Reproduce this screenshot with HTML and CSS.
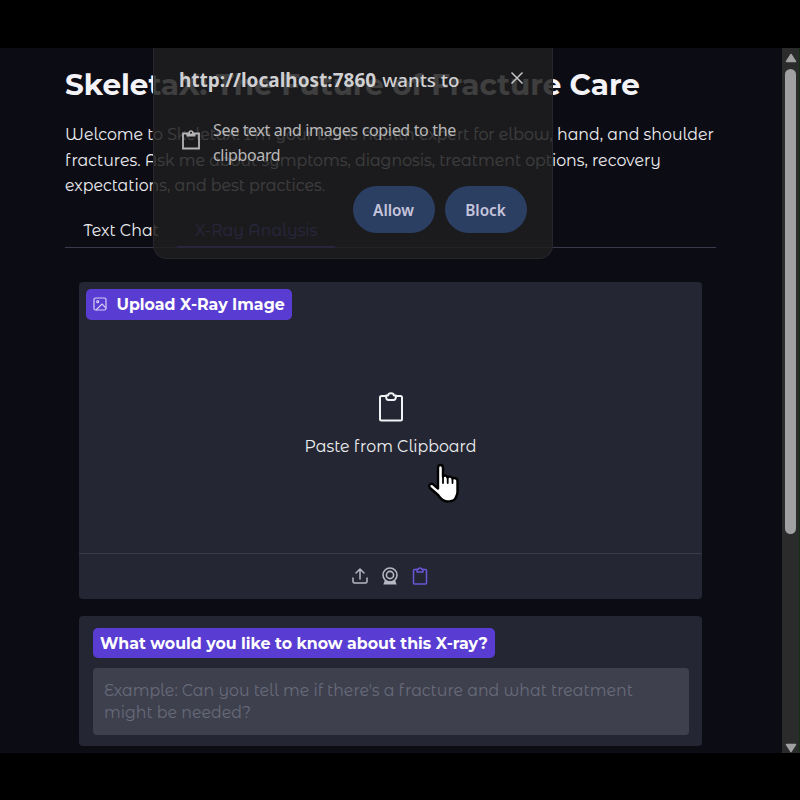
FILE: index.html
```
<!DOCTYPE html>
<html lang="en">
<head>
<meta charset="utf-8">
<title>SkeletaX</title>
<link rel="stylesheet" href="styles.css">
</head>
<body>
<div class="screen">
  <main class="page">
    <h1>SkeletaX: The Future of Fracture Care</h1>
    <p class="intro">
      <span>Welcome to SkeletaX! I'm your bone health expert for elbow, hand, and shoulder</span>
      <span>fractures. Ask me about symptoms, diagnosis, treatment options, recovery</span>
      <span>expectations, and best practices.</span>
    </p>
    <nav class="tabs">
      <span class="tab t1">Text Chat</span>
      <span class="tab active t2">X-Ray Analysis</span>
    </nav>
    <section class="card upload">
      <div class="label label-img">
        <svg width="14" height="14" viewBox="0 0 14 14" fill="none" stroke="#d5cdf7" stroke-width="1.2"><rect x="1" y="1" width="12" height="12" rx="1.5"/><circle cx="4.7" cy="4.7" r="1"/><path d="M3 13l6-6 4 4"/></svg>
        <span>Upload X-Ray Image</span>
      </div>
      <div class="drop">
        <svg width="26" height="30" viewBox="0 0 26 30" fill="none" stroke="#f1f2f5" stroke-width="2" stroke-linejoin="round"><path d="M8 4H3.5Q2 4 2 5.500V27Q2 28.500 3.500 28.500H22.500Q24 28.500 24 27V5.500Q24 4 22.500 4H18"/><path d="M8 3.500H10C10.500 .6 15.500 .6 16 3.500H18C18 6.500 17 8 15.500 8H10.500C9 8 8 6.500 8 3.500Z"/></svg>
        <span class="paste">Paste from Clipboard</span>
      </div>
      <div class="sources">
        <svg width="16" height="18" viewBox="0 0 16 18" fill="none" stroke="#b6b8c2" stroke-width="1.5" stroke-linecap="round" stroke-linejoin="round"><path d="M8 12V2M4 6l4-4 4 4M1 11v3.500Q1 16 2.500 16h11Q15 16 15 14.500V11"/></svg>
        <svg width="18" height="18" viewBox="0 0 18 18" fill="none" stroke="#b6b8c2" stroke-width="1.6"><circle cx="9" cy="8" r="7"/><circle cx="9" cy="8" r="3.600"/><path d="M4.500 14L3.500 16.700H14.500L13.500 14C11 15.500 7 15.500 4.500 14Z" fill="#b6b8c2"/></svg>
        <svg width="16" height="18" viewBox="0 0 16 18" fill="none" stroke="#6a55d8" stroke-width="1.500" stroke-linejoin="round"><path d="M5 2.500H2.500Q1.500 2.500 1.500 3.500V16Q1.500 17 2.500 17H13.500Q14.500 17 14.500 16V3.500Q14.500 2.500 13.500 2.500H11"/><path d="M5 2.300H6.200C6.500 .6 9.500 .6 9.800 2.300H11V5H5Z"/></svg>
      </div>
    </section>
    <section class="card question">
      <div class="label">What would you like to know about this X-ray?</div>
      <div class="field">
        <span>Example: Can you tell me if there's a fracture and what treatment</span>
        <span>might be needed?</span>
      </div>
    </section>
  </main>
  <aside class="scrollbar">
    <svg width="12" height="10" viewBox="0 0 12 10"><path d="M6 1.500L10.500 8.500H1.500Z" fill="#a0a0a2" stroke="#a0a0a2" stroke-width="1.500" stroke-linejoin="round"/></svg>
    <div class="track"><div class="thumb"></div></div>
    <svg width="12" height="10" viewBox="0 0 12 10"><path d="M6 8.500L10.500 1.500H1.500Z" fill="#a0a0a2" stroke="#a0a0a2" stroke-width="1.500" stroke-linejoin="round"/></svg>
  </aside>
  <div class="prompt">
    <div class="prompt-head">
      <div class="site"><b>http://localhost:7860</b> <span>wants to</span></div>
      <svg width="14" height="14" viewBox="0 0 14 14" stroke="#c4c4c6" stroke-width="1.500"><path d="M1.500 1.500l11 11M12.500 1.500l-11 11"/></svg>
    </div>
    <div class="perm">
      <svg width="18" height="20" viewBox="0 0 18 20" fill="none" stroke="#b4b4b6" stroke-width="1.800"><path d="M1 3.500H17V18.500H1Z"/><path d="M4.500 3H13.500V6.500H4.500Z" fill="#b4b4b6" stroke="none"/><circle cx="9" cy="2.800" r="1.800" fill="#1c1c1d" stroke-width="1.500"/></svg>
      <div class="perm-text"><span>See text and images copied to the</span><span>clipboard</span></div>
    </div>
    <div class="actions"><div class="btn">Allow</div><div class="btn">Block</div></div>
  </div>
  <svg class="cursor" width="34" height="42" viewBox="0 0 34 42"><path d="M11 5C11 1 16 1 16 5V13.500C17 12 20 12.500 20.500 14.500C21.500 13 25 13.500 25.500 15.500C27 14.500 30.500 15 30.500 18V29C30.500 32 29 34 28 36C26 38.500 23.500 38.500 20 38.500C16 38.500 13.500 35.500 11 32L3 25C0.500 21.500 4.500 19.500 7 22L11 25.500Z" fill="#fff" stroke="#000" stroke-width="2.400" stroke-linejoin="round"/><path d="M16 13V20M20.700 14.500V20M25.500 15.500V20" stroke="#000" stroke-width="1.800" stroke-linecap="round"/></svg>
</div>
</body>
</html>
```
FILE: styles.css
```
* { box-sizing: border-box; }
body {
  margin: 0;
  height: 800px;
  padding: 48px 0;
  background: #000;
  color: #eeeef0;
  font-family: "Montserrat Alternates", Montserrat, Inter, sans-serif;
  font-size: 15.8px;
  overflow: hidden;
}
svg { display: block; flex: none; }
.screen {
  position: relative;
  display: flex;
  height: 705px;
  background: #0c0c15;
  border-right: 1px solid #163016;
}
.page { width: 782px; padding: 16px 66px 0 65px; overflow: hidden; white-space: nowrap; }
h1 { margin: 0; height: 40px; line-height: 41px; font-family: Montserrat, Inter, sans-serif; font-size: 29.45px; font-weight: 700; color: #f4f4f8; }
.intro { margin: 18px 0 0; line-height: 25.7px; }
.intro span { display: block; }
.tabs { display: flex; height: 49px; border-bottom: 1px solid #3b3b50; align-items: stretch; }
.tab { padding: 20px 18px 0; line-height: 24px; height: 49px; }
.t1 { width: 112px; padding-left: 18.5px; }
.t2 { width: 158px; }
.active { color: #5b4fe6; border-bottom: 2px solid #5b4fe6; }
.card { margin-left: 14px; width: 623px; background: #242733; border-radius: 4px; }
.upload { display: flex; flex-direction: column; margin-top: 34px; height: 317px; padding-top: 7px; }
.label {
  display: inline-flex;
  align-items: center;
  height: 31px;
  padding: 0 7px;
  border-radius: 5px;
  background: #593dd2;
  color: #fff;
  font-family: Montserrat, Inter, sans-serif;
  font-weight: 700;
  align-self: flex-start;
}
.label-img { margin-left: 7px; gap: 9.5px; width: 206px; padding-bottom: 1px; }
.drop { flex: 1; display: flex; flex-direction: column; align-items: center; padding-top: 72px; gap: 13px; }
.paste { line-height: 24px; }
.sources { display: flex; justify-content: center; align-items: center; gap: 13px; height: 46px; padding: 0 1px 2px 0; border-top: 1px solid #393c49; }
.question { display: flex; flex-direction: column; margin-top: 17px; height: 130px; padding: 12px 13px 0 14px; }
.question .label { width: 402px; height: 30px; }
.field { margin-top: 10px; height: 67px; padding: 12px 11px 0; border-radius: 4px; background: #3e404e; color: #686b79; line-height: 22px; }
.field span { display: block; }
.scrollbar { display: flex; flex-direction: column; align-items: center; width: 17px; padding: 5px 0 0; background: #2b2b2b; }
.track { flex: 1; padding-top: 6px; }
.thumb { width: 11px; height: 465px; border-radius: 6px; background: #a0a0a2; }
.prompt {
  position: absolute;
  left: 153px;
  top: 0;
  width: 400px;
  height: 211px;
  padding: 20px 25px 0 25px;
  border: 1px solid #27272b;
  border-top: 0;
  border-radius: 0 0 14px 14px;
  background: rgba(30, 30, 30, .85);
  color: #b8b8ba;
  font-family: "Noto Sans", "Open Sans", sans-serif;
  font-size: 16px;
  white-space: nowrap;
}
.prompt-head { display: flex; justify-content: space-between; height: 24px; padding-right: 3px; line-height: 24px; font-size: 19px; color: #d0d0d3; }
.prompt-head svg { margin-top: 3px; }
.site { display: flex; gap: 6px; }
.site span { font-weight: 500; font-size: 18.7px; }
.perm { display: flex; gap: 13px; margin-top: 26px; padding-left: 3px; line-height: 24.500px; }
.perm svg { margin-top: 12px; }
.perm-text span { display: block; letter-spacing: -.34px; }
.actions { display: flex; justify-content: flex-end; gap: 10px; margin-top: 19px; }
.btn { width: 82px; height: 47px; padding-right: 1px; border-radius: 24px; background: #2b3f63; color: #c6c4dc; text-align: center; line-height: 49px; font-weight: 600; font-size: 15.300px; }
.cursor { position: absolute; left: 427px; top: 415px; }
```
